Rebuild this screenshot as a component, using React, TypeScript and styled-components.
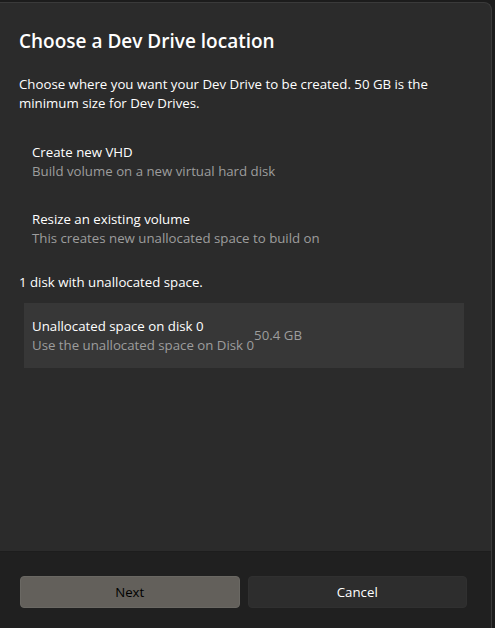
import React from "react";
import styled, { createGlobalStyle } from "styled-components";

const GlobalStyle = createGlobalStyle`
  html, body {
    margin: 0;
    padding: 0;
    background: #1c1c1c;
    font-family: "Segoe UI", "Open Sans", "Noto Sans", sans-serif;
    -webkit-font-smoothing: antialiased;
  }
`;

interface Option {
  title: string;
  subtitle: string;
}

const options: Option[] = [
  { title: "Create new VHD", subtitle: "Build volume on a new virtual hard disk" },
  {
    title: "Resize an existing volume",
    subtitle: "This creates new unallocated space to build on",
  },
];

const App: React.FC = () => {
  return (
    <>
      <GlobalStyle />
      <Dialog>
        <Content>
          <Title>Choose a Dev Drive location</Title>
          <Body>
            Choose where you want your Dev Drive to be created. 50 GB is the
            minimum size for Dev Drives.
          </Body>
          <OptionList>
            {options.map((o) => (
              <OptionItem key={o.title}>
                <ItemTitle>{o.title}</ItemTitle>
                <ItemSub>{o.subtitle}</ItemSub>
              </OptionItem>
            ))}
          </OptionList>
          <DiskCount>1 disk with unallocated space.</DiskCount>
          <DiskCard>
            <div>
              <ItemTitle>Unallocated space on disk 0</ItemTitle>
              <ItemSub>Use the unallocated space on Disk 0</ItemSub>
            </div>
            <Size>50.4 GB</Size>
          </DiskCard>
        </Content>
        <Footer>
          <Button $primary aria-disabled="true">
            <Label $primary>Next</Label>
          </Button>
          <Button>
            <Label>Cancel</Label>
          </Button>
        </Footer>
      </Dialog>
    </>
  );
};

export default App;

interface ButtonProps {
  $primary?: boolean;
}

const Dialog = styled.div`
  margin-top: 2px;
  width: 492px;
  height: 626px;
  box-sizing: border-box;
  background: #2b2b2b;
  border-top: 1px solid #3a3a3a;
  border-right: 1px solid #3a3a3a;
  border-top-right-radius: 8px;
  display: flex;
  flex-direction: column;
  overflow: hidden;
`;

const Content = styled.div`
  flex: 1;
  padding: 24px 31px 0 19px;
  color: #ffffff;
`;

const Title = styled.h1`
  margin: 0;
  font-size: 19px;
  font-weight: 600;
  line-height: 28px;
`;

const Body = styled.p`
  margin: 20px 0 0;
  font-size: 13.25px;
  line-height: 19px;
`;

const OptionList = styled.div`
  margin-top: 30px;
  padding-left: 13px;
  display: flex;
  flex-direction: column;
  gap: 29px;
`;

const OptionItem = styled.div`
  display: flex;
  flex-direction: column;
`;

const ItemTitle = styled.div`
  font-size: 13.25px;
  line-height: 19px;
  color: #ffffff;
`;

const ItemSub = styled.div`
  font-size: 13.25px;
  line-height: 19px;
  color: #9d9d9d;
`;

const DiskCount = styled.div`
  margin-top: 25px;
  font-size: 13.25px;
  line-height: 19px;
`;

const DiskCard = styled.div`
  margin: 11px 0 0 5px;
  width: 440px;
  height: 65px;
  box-sizing: border-box;
  padding: 0 8px;
  background: #373737;
  display: flex;
  align-items: center;
`;

const Size = styled.div`
  font-size: 13.25px;
  line-height: 19px;
  color: #9d9d9d;
`;

const Footer = styled.div`
  height: 77px;
  flex-shrink: 0;
  box-sizing: border-box;
  background: #202020;
  border-top: 1px solid #1d1d1d;
  padding: 24px 24px 0 20px;
  display: flex;
  gap: 8px;
`;

const Button = styled.button<ButtonProps>`
  width: 220px;
  height: 32px;
  padding: 0;
  border-radius: 4px;
  font-family: inherit;
  font-size: 13.25px;
  border: 1px solid ${(p) => (p.$primary ? "#6a6863" : "#303030")};
  background: ${(p) => (p.$primary ? "#63605b" : "#2d2d2d")};
`;

const Label = styled.span<ButtonProps>`
  color: ${(p) => (p.$primary ? "#000000" : "#ffffff")};
`;
